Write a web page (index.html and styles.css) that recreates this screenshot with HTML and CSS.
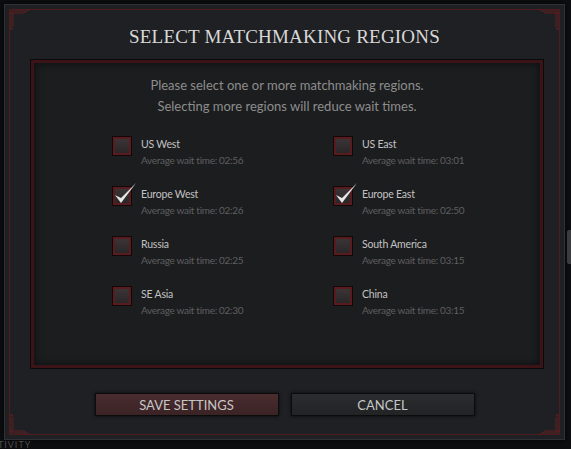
FILE: index.html
```html
<!DOCTYPE html>
<html lang="en">
<head>
    <meta charset="UTF-8">
    <meta name="viewport" content="width=device-width, initial-scale=1.0">
    <title>Select Matchmaking Regions</title>
    <link rel="stylesheet" href="styles.css">
</head>
<body>
    <div class="screen">
        <div class="dialog">
            <div class="frame">
                <svg class="corner tl" width="22" height="22" viewBox="0 0 22 22"><path d="M2 21 V2 H18 L21 0 M4 19 L2 21 M0 4 H4 V18 M4 4 H15 L17 2"/></svg>
                <svg class="corner tr" width="22" height="22" viewBox="0 0 22 22"><path d="M2 21 V2 H18 L21 0 M4 19 L2 21 M0 4 H4 V18 M4 4 H15 L17 2"/></svg>
                <svg class="corner bl" width="22" height="22" viewBox="0 0 22 22"><path d="M2 21 V2 H18 L21 0 M4 19 L2 21 M0 4 H4 V18 M4 4 H15 L17 2"/></svg>
                <svg class="corner br" width="22" height="22" viewBox="0 0 22 22"><path d="M2 21 V2 H18 L21 0 M4 19 L2 21 M0 4 H4 V18 M4 4 H15 L17 2"/></svg>

                <div class="title">Select Matchmaking Regions</div>

                <div class="panel">
                    <div class="intro">
                        Please select one or more matchmaking regions.<br>
                        Selecting more regions will reduce wait times.
                    </div>
                    <div class="regions">
                        <div class="region">
                            <span class="check"></span>
                            <div><div class="name">US West</div><div class="wait">Average wait time: 02:56</div></div>
                        </div>
                        <div class="region">
                            <span class="check"></span>
                            <div><div class="name">US East</div><div class="wait">Average wait time: 03:01</div></div>
                        </div>
                        <div class="region">
                            <span class="check checked"><svg width="24" height="24" viewBox="0 0 24 24"><path d="M2 13 L8 21 L23 1 L8 16 Z"/></svg></span>
                            <div><div class="name">Europe West</div><div class="wait">Average wait time: 02:26</div></div>
                        </div>
                        <div class="region">
                            <span class="check checked"><svg width="24" height="24" viewBox="0 0 24 24"><path d="M2 13 L8 21 L23 1 L8 16 Z"/></svg></span>
                            <div><div class="name">Europe East</div><div class="wait">Average wait time: 02:50</div></div>
                        </div>
                        <div class="region">
                            <span class="check"></span>
                            <div><div class="name">Russia</div><div class="wait">Average wait time: 02:25</div></div>
                        </div>
                        <div class="region">
                            <span class="check"></span>
                            <div><div class="name">South America</div><div class="wait">Average wait time: 03:15</div></div>
                        </div>
                        <div class="region">
                            <span class="check"></span>
                            <div><div class="name">SE Asia</div><div class="wait">Average wait time: 02:30</div></div>
                        </div>
                        <div class="region">
                            <span class="check"></span>
                            <div><div class="name">China</div><div class="wait">Average wait time: 03:15</div></div>
                        </div>
                    </div>
                </div>

                <div class="buttons">
                    <button class="btn save">Save Settings</button>
                    <button class="btn cancel">Cancel</button>
                </div>
            </div>
        </div>
        <div class="edge-tab"></div>
    </div>
    <div class="backdrop-label">Activity</div>
</body>
</html>
```

FILE: styles.css
```css
body {
    margin: 0;
    background-color: #0d0e10;
    font-family: Lato, "Open Sans", sans-serif;
    overflow: hidden;
}
.screen {
    display: flex;
    align-items: flex-start;
    padding: 4px 0 0 4px;
}
.dialog {
    width: 559px;
    height: 434px;
    background: #1f2023;
    border: 1px solid #2f3134;
    box-shadow: 0 0 6px rgba(0, 0, 0, 0.8);
}
.frame {
    position: relative;
    margin: 4px;
    height: 426px;
    border: 1px solid #4e1b1f;
    box-sizing: border-box;
}
.corner {
    position: absolute;
    fill: none;
    stroke: #5e1f23;
    stroke-width: 1;
}
.corner.tl { left: -1px; top: -1px; }
.corner.tr { right: -1px; top: -1px; transform: scaleX(-1); }
.corner.bl { left: -1px; bottom: -1px; transform: scaleY(-1); }
.corner.br { right: -1px; bottom: -1px; transform: scale(-1, -1); }
.title {
    height: 50px;
    line-height: 53px;
    text-align: center;
    font-family: "Liberation Serif", serif;
    font-size: 19px;
    letter-spacing: 0.2px;
    text-transform: uppercase;
    color: #d8d8d8;
}
.panel {
    width: 506px;
    height: 302px;
    margin-left: 21px;
    background: #1c1d1f;
    border: 3px solid #3c1316;
    outline: 1px solid #0a0a0b;
    box-shadow: inset 0 0 8px rgba(0, 0, 0, 0.6);
}
.intro {
    padding-top: 12px;
    text-align: center;
    font-size: 13px;
    line-height: 21px;
    color: #8d8d8d;
}
.regions {
    display: grid;
    grid-template-columns: 221px 221px;
    row-gap: 18px;
    margin-top: 19px;
    padding-left: 79px;
}
.region {
    display: flex;
    gap: 10px;
}
.check {
    position: relative;
    width: 14px;
    height: 14px;
    margin-top: 1px;
    border: 2px solid #581c20;
    outline: 1px solid #140708;
    background: linear-gradient(#3b3436, #2a2628);
}
.check svg {
    position: absolute;
    left: -2px;
    top: -7px;
    fill: #e6e6e6;
}
.name {
    font-size: 10.5px;
    line-height: 16px;
    letter-spacing: -0.2px;
    color: #c2c2c2;
}
.wait {
    font-size: 10px;
    line-height: 16px;
    letter-spacing: -0.3px;
    color: #5f5f5f;
}
.buttons {
    display: flex;
    justify-content: center;
    gap: 12px;
    margin-top: 25px;
}
.btn {
    width: 184px;
    height: 23px;
    padding: 0;
    font-family: Lato, sans-serif;
    font-size: 13px;
    text-transform: uppercase;
    color: #c6c6c6;
    border: 1px solid #0c0c0d;
    box-shadow: 0 0 3px rgba(0, 0, 0, 0.8);
    cursor: pointer;
}
.save {
    background: linear-gradient(#4a2c2f, #3a2325);
}
.cancel {
    background: linear-gradient(#2b2c2f, #222325);
}
.edge-tab {
    width: 4px;
    height: 34px;
    margin-top: 226px;
    margin-left: 2px;
    background: #3a3b3e;
    border-radius: 2px 0 0 2px;
}
.backdrop-label {
    margin-top: 0;
    margin-left: -16px;
    font-size: 9px;
    line-height: 9px;
    letter-spacing: 1px;
    text-transform: uppercase;
    color: #4e4e4e;
}
```
